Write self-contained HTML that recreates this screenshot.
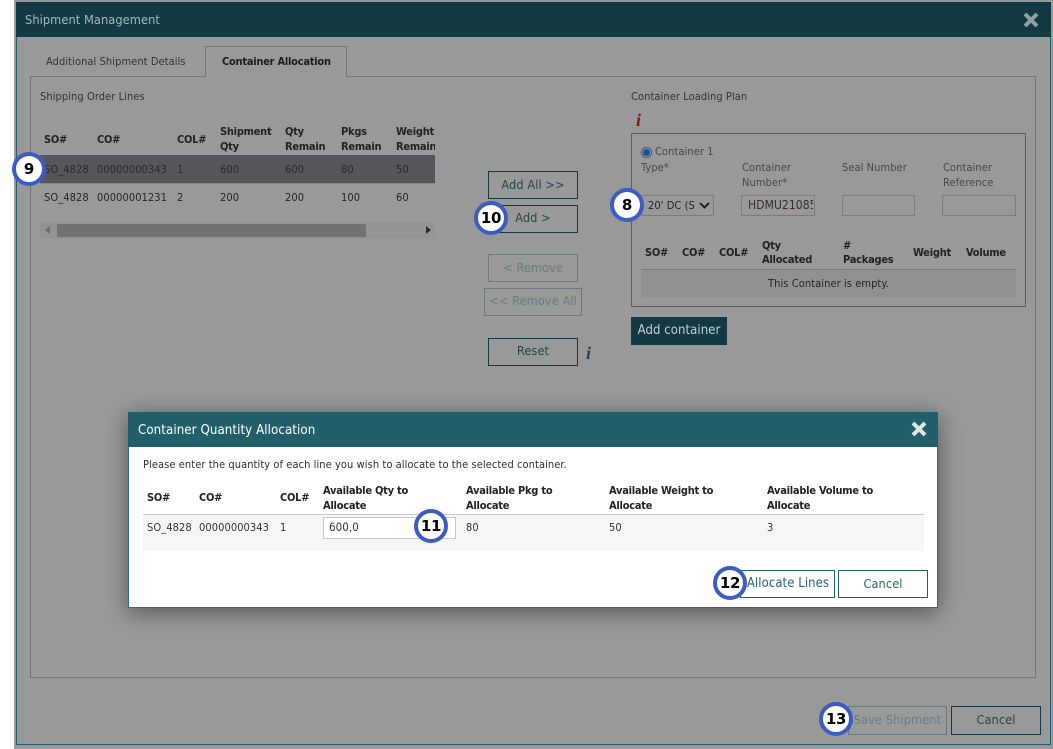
<!DOCTYPE html>
<html><head><meta charset="utf-8"><title>Shipment Management</title>
<style>
html,body{margin:0;padding:0;width:1053px;height:749px;overflow:hidden;background:#fff}
*{box-sizing:border-box}
body{font-family:"DejaVu Sans Condensed","DejaVu Sans","Liberation Sans",sans-serif;font-stretch:condensed;font-size:11px;color:#333;letter-spacing:.07px}
.a{position:absolute}
.t{position:absolute;white-space:nowrap;line-height:15px;height:15px}
.b{font-weight:bold;color:#1c1c20;letter-spacing:-.25px}
.g{color:#333336}
.w{color:#242428}
.h{font-weight:bold;color:#222226;letter-spacing:-.25px}
.btn{position:absolute;border:1px solid #133a42;color:#27464c;font-size:12.7px;text-align:center;line-height:24px}
.dis{border-color:#6d7a7c;color:#658082}
.wb{border-color:#235f6a;color:#2a636b;background:#fff}
.inp{position:absolute;border:1px solid #7c7c7c;height:21px;top:195px;background:#999}
.badge{position:absolute;width:34px;height:34px;border-radius:50%;background:#fff;border:4px solid #3c5cc4;color:#000;font-weight:bold;font-family:"DejaVu Sans",sans-serif;font-stretch:normal;font-size:15px;text-align:center;line-height:26px;letter-spacing:-.3px}
</style></head><body>
<div class="a" style="left:14px;top:0;width:1039px;height:749px;background:#999"></div>
<div class="a" style="left:16px;top:2px;width:1035px;height:743px;border:1px solid #235f6a;border-top:0"></div>
<div class="a" style="left:16px;top:2px;width:1035px;height:35px;background:#133a42"></div>
<div class="t" style="left:25px;top:12px;font-size:12.7px;color:#a8b6b8">Shipment Management</div>
<svg class="a" style="left:1023px;top:12px" width="16" height="16" viewBox="0 0 16 16"><path d="M2 2L14 14M14 2L2 14" stroke="#8fa1a3" stroke-width="4" fill="none"/></svg>

<div class="a" style="left:30px;top:76px;width:1006px;height:602px;border:1px solid #757575"></div>
<div class="a" style="left:205px;top:46px;width:142px;height:31px;border:1px solid #757575;border-bottom:0;background:#999"></div>
<div class="t g" style="left:46px;top:54px">Additional Shipment Details</div>
<div class="t b" style="left:222px;top:54px">Container Allocation</div>
<div class="t g" style="left:40px;top:89px">Shipping Order Lines</div>

<div class="t h" style="left:44px;top:132px">SO#</div>
<div class="t h" style="left:97px;top:132px">CO#</div>
<div class="t h" style="left:177px;top:132px">COL#</div>
<div class="t h" style="left:220px;top:124px">Shipment</div>
<div class="t h" style="left:220px;top:139px">Qty</div>
<div class="t h" style="left:285px;top:124px">Qty</div>
<div class="t h" style="left:285px;top:139px">Remain</div>
<div class="t h" style="left:341px;top:124px">Pkgs</div>
<div class="t h" style="left:341px;top:139px">Remain</div>
<div class="a" style="left:396px;top:124px;width:39px;height:30px;overflow:hidden">
<div class="t h" style="left:0;top:0">Weight</div><div class="t h" style="left:0;top:15px">Remain</div></div>

<div class="a" style="left:40px;top:155px;width:395px;height:28px;background:#55565c"></div>
<div class="a" style="left:40px;top:183px;width:395px;height:1px;background:#8a8a8a"></div>
<div class="t" style="left:44px;top:162px;color:#2a2a2e">SO_4828</div>
<div class="t" style="left:97px;top:162px;color:#2a2a2e">00000000343</div>
<div class="t" style="left:177px;top:162px;color:#2a2a2e">1</div>
<div class="t" style="left:220px;top:162px;color:#2a2a2e">600</div>
<div class="t" style="left:285px;top:162px;color:#2a2a2e">600</div>
<div class="t" style="left:341px;top:162px;color:#2a2a2e">80</div>
<div class="t" style="left:396px;top:162px;color:#2a2a2e">50</div>
<div class="t w" style="left:44px;top:190px">SO_4828</div>
<div class="t w" style="left:97px;top:190px">00000001231</div>
<div class="t w" style="left:177px;top:190px">2</div>
<div class="t w" style="left:220px;top:190px">200</div>
<div class="t w" style="left:285px;top:190px">200</div>
<div class="t w" style="left:341px;top:190px">100</div>
<div class="t w" style="left:396px;top:190px">60</div>

<div class="a" style="left:40px;top:222px;width:395px;height:17px;background:#949494"></div>
<div class="a" style="left:57px;top:224px;width:309px;height:13px;background:#727272"></div>
<svg class="a" style="left:44px;top:226px" width="8" height="9"><path d="M6 0V8L1 4Z" fill="#6e6e6e"/></svg>
<svg class="a" style="left:424px;top:226px" width="8" height="9"><path d="M2 0V8L7 4Z" fill="#2e2e2e"/></svg>

<div class="btn" style="left:488px;top:171px;width:90px;height:28px;line-height:26px">Add All &gt;&gt;</div>
<div class="btn" style="left:488px;top:205px;width:90px;height:28px;line-height:24px">Add &gt;</div>
<div class="btn dis" style="left:488px;top:254px;width:90px;height:28px;line-height:25px">&lt; Remove</div>
<div class="btn dis" style="left:484px;top:288px;width:98px;height:28px;line-height:24px">&lt;&lt; Remove All</div>
<div class="btn" style="left:488px;top:338px;width:90px;height:28px;line-height:24px">Reset</div>
<div class="t" style="left:586px;top:344px;font:italic bold 18px/18px 'Liberation Serif',serif;color:#25484e">i</div>

<div class="t g" style="left:631px;top:89px">Container Loading Plan</div>
<div class="t" style="left:636px;top:111px;font:italic bold 18px/18px 'Liberation Serif',serif;color:#8c1414">i</div>
<div class="a" style="left:631px;top:133px;width:395px;height:174px;border:1px solid #5e5e5e"></div>
<div class="a" style="left:641px;top:147px;width:11px;height:11px;border-radius:50%;border:1px solid #2b5a9e;background:#999"></div>
<div class="a" style="left:643px;top:149px;width:7px;height:7px;border-radius:50%;background:#1d4f9a"></div>
<div class="t" style="left:655px;top:144px;color:#47494a">Container 1</div>
<div class="t" style="left:641px;top:160px;color:#47494a">Type*</div>
<div class="t" style="left:742px;top:160px;color:#47494a">Container</div>
<div class="t" style="left:742px;top:175px;color:#47494a">Number*</div>
<div class="t" style="left:842px;top:160px;color:#47494a">Seal Number</div>
<div class="t" style="left:943px;top:160px;color:#47494a">Container</div>
<div class="t" style="left:943px;top:175px;color:#47494a">Reference</div>
<div class="inp" style="left:641px;width:73px"></div>
<div class="t w" style="left:648px;top:198px;width:47px;overflow:hidden">20' DC (S</div>
<svg class="a" style="left:699px;top:202px" width="11" height="7"><path d="M1 1L5.500 5.500L10 1" stroke="#222" stroke-width="2" fill="none"/></svg>
<div class="inp" style="left:741px;width:74px"></div>
<div class="t" style="left:748px;top:198px;width:65px;overflow:hidden;font-size:12px;color:#3a2a3a">HDMU21085</div>
<div class="inp" style="left:842px;width:73px"></div>
<div class="inp" style="left:942px;width:74px"></div>
<div class="t h" style="left:645px;top:245px">SO#</div>
<div class="t h" style="left:682px;top:245px">CO#</div>
<div class="t h" style="left:719px;top:245px">COL#</div>
<div class="t h" style="left:762px;top:238px">Qty</div>
<div class="t h" style="left:762px;top:252px">Allocated</div>
<div class="t h" style="left:843px;top:238px">#</div>
<div class="t h" style="left:843px;top:252px">Packages</div>
<div class="t h" style="left:913px;top:245px">Weight</div>
<div class="t h" style="left:966px;top:245px">Volume</div>
<div class="a" style="left:641px;top:269px;width:375px;height:28px;background:#909192;border-top:1px solid #7a7a7a"></div>
<div class="t w" style="left:641px;top:276px;width:375px;text-align:center">This Container is empty.</div>
<div class="a" style="left:631px;top:317px;width:96px;height:28px;background:#133a42;color:#c4cfd1;font-size:13px;text-align:center;line-height:28px">Add container</div>

<div class="btn dis" style="left:848px;top:706px;width:99px;height:29px;line-height:26px">Save Shipment</div>
<div class="btn" style="left:951px;top:706px;width:90px;height:29px;line-height:26px">Cancel</div>

<div class="a" style="left:128px;top:412px;width:810px;height:196px;background:#fff;border:1px solid #2b6c75;box-shadow:0 4px 22px rgba(0,0,0,.45)"></div>
<div class="a" style="left:128px;top:412px;width:810px;height:35px;background:#235f6a"></div>
<div class="t" style="left:138px;top:423px;font-size:13.2px;color:#fff">Container Quantity Allocation</div>
<svg class="a" style="left:911px;top:421px" width="16" height="16" viewBox="0 0 16 16"><path d="M2 2L14 14M14 2L2 14" stroke="#dfe6e7" stroke-width="4" fill="none"/></svg>
<div class="t" style="left:143px;top:457px;color:#2e2e34">Please enter the quantity of each line you wish to allocate to the selected container.</div>
<div class="t h" style="left:147px;top:490px">SO#</div>
<div class="t h" style="left:199px;top:490px">CO#</div>
<div class="t h" style="left:280px;top:490px">COL#</div>
<div class="t h" style="left:323px;top:483px">Available Qty to</div>
<div class="t h" style="left:323px;top:498px">Allocate</div>
<div class="t h" style="left:466px;top:483px">Available Pkg to</div>
<div class="t h" style="left:466px;top:498px">Allocate</div>
<div class="t h" style="left:609px;top:483px">Available Weight to</div>
<div class="t h" style="left:609px;top:498px">Allocate</div>
<div class="t h" style="left:767px;top:483px">Available Volume to</div>
<div class="t h" style="left:767px;top:498px">Allocate</div>
<div class="a" style="left:143px;top:514px;width:781px;height:37px;background:#f6f6f6;border-top:1px solid #c8c8c8"></div>
<div class="t" style="left:147px;top:520px;color:#333">SO_4828</div>
<div class="t" style="left:199px;top:520px;color:#333">00000000343</div>
<div class="t" style="left:280px;top:520px;color:#333">1</div>
<div class="a" style="left:323px;top:517px;width:133px;height:22px;background:#fff;border:1px solid #c6c6c6"></div>
<div class="t" style="left:329px;top:520px;font-size:11.500px;color:#333">600,0</div>
<div class="t" style="left:466px;top:520px;color:#333">80</div>
<div class="t" style="left:609px;top:520px;color:#333">50</div>
<div class="t" style="left:767px;top:520px;color:#333">3</div>
<div class="btn wb" style="left:740px;top:570px;width:95px;height:28px;line-height:26px;font-size:13px;padding-left:1px">Allocate Lines</div>
<div class="btn wb" style="left:838px;top:570px;width:90px;height:28px;line-height:25px">Cancel</div>

<div class="badge" style="left:12px;top:152px">9</div>
<div class="badge" style="left:610px;top:188px">8</div>
<div class="badge" style="left:474px;top:201px">10</div>
<div class="badge" style="left:414px;top:509px">11</div>
<div class="badge" style="left:713px;top:566px">12</div>
<div class="badge" style="left:819px;top:702px">13</div>
</body></html>
